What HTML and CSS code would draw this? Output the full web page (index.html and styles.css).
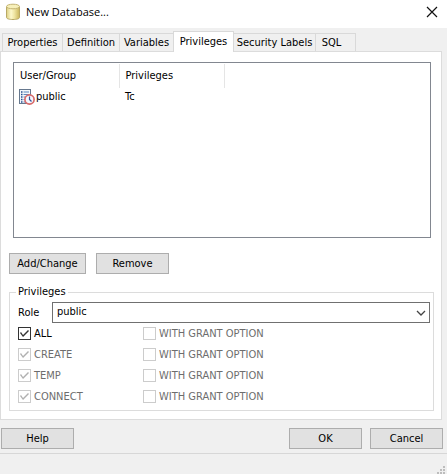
FILE: index.html
```html
<!DOCTYPE html>
<html lang="en">
<head>
<meta charset="utf-8">
<title>New Database...</title>
<link rel="stylesheet" href="styles.css">
</head>
<body>
<form class="dialog">
  <header class="titlebar">
    <svg class="db-icon" width="16" height="18" viewBox="0 0 16 18" aria-hidden="true">
      <defs>
        <linearGradient id="gold"><stop offset="0" stop-color="#dccf80"/><stop offset=".35" stop-color="#fdf8cc"/><stop offset=".6" stop-color="#f0e6a4"/><stop offset="1" stop-color="#cbb65c"/></linearGradient>
      </defs>
      <path d="M1.500 4v10.500c0 1.300 3 2 6.500 2s6.500-.7 6.500-2V4z" fill="url(#gold)" stroke="#b9a966"/>
      <ellipse cx="8" cy="3.500" rx="6.500" ry="2.300" fill="#f7f0ba" stroke="#c4b473"/>
    </svg>
    <h1 class="title">New Database...</h1>
    <button class="close" type="button" aria-label="Close">
      <svg width="12" height="12" viewBox="0 0 12 12"><path d="M1 1l10 10M11 1L1 11" stroke="#111" stroke-width="1.200"/></svg>
    </button>
  </header>
  <main class="body">
    <div class="tabs" role="tablist">
      <button class="tab tab-properties" type="button" role="tab">Properties</button>
      <button class="tab tab-definition" type="button" role="tab">Definition</button>
      <button class="tab tab-variables" type="button" role="tab">Variables</button>
      <button class="tab tab-privileges active" type="button" role="tab" aria-selected="true">Privileges</button>
      <button class="tab tab-security" type="button" role="tab">Security Labels</button>
      <button class="tab tab-sql" type="button" role="tab">SQL</button>
    </div>
    <section class="panel">
      <div class="list">
        <table class="grants">
          <thead><tr><th class="col-user">User/Group</th><th class="col-priv">Privileges</th><th></th></tr></thead>
          <tbody><tr>
            <td><span class="user">
              <svg width="16" height="16" viewBox="0 0 16 16" aria-hidden="true">
                <rect x=".5" y=".5" width="11" height="14" fill="#f3f7fc" stroke="#66788e"/>
                <path d="M2 3h1.500M2 5.500h1.500M2 8h1.500M2 10.500h1.500M2 13h1.500" stroke="#244f91" stroke-width="1.300"/>
                <path d="M4.500 3H10M4.500 5.500H10M4.500 8H10M4.500 10.500H7M4.500 13H7" stroke="#5d87bd" stroke-width="1.200"/>
                <circle cx="10.500" cy="10.500" r="4.600" fill="#f4f7ff" stroke="#d86a6a" stroke-width="1.700"/>
                <path d="M10.500 7.500v3l2 2" fill="none" stroke="#32549a" stroke-width="1.200"/>
              </svg>public</span></td>
            <td>Tc</td><td></td>
          </tr></tbody>
        </table>
      </div>
      <div class="actions">
        <button class="btn btn-add" type="button">Add/Change</button>
        <button class="btn" type="button">Remove</button>
      </div>
      <fieldset class="group">
        <legend>Privileges</legend>
        <div class="role">
          <label for="role">Role</label>
          <div class="combo">
            <select id="role"><option>public</option></select>
            <svg class="chevron" width="10" height="6" viewBox="0 0 10 6" aria-hidden="true"><path d="M1 1l4 4 4-4" fill="none" stroke="#444" stroke-width="1.300"/></svg>
          </div>
        </div>
        <div class="checks">
          <label class="check"><input type="checkbox" checked>ALL</label>
          <label class="check"><input type="checkbox" disabled>WITH GRANT OPTION</label>
          <label class="check"><input type="checkbox" checked disabled>CREATE</label>
          <label class="check"><input type="checkbox" disabled>WITH GRANT OPTION</label>
          <label class="check"><input type="checkbox" checked disabled>TEMP</label>
          <label class="check"><input type="checkbox" disabled>WITH GRANT OPTION</label>
          <label class="check"><input type="checkbox" checked disabled>CONNECT</label>
          <label class="check"><input type="checkbox" disabled>WITH GRANT OPTION</label>
        </div>
      </fieldset>
    </section>
  </main>
  <div class="buttons">
    <button class="btn" type="button">Help</button>
    <button class="btn btn-ok" type="button">OK</button>
    <button class="btn" type="button">Cancel</button>
  </div>
  <footer class="status">
    <svg width="8" height="8" viewBox="0 0 8 8" aria-hidden="true"><path d="M6 0h2v2H6zM3 3h2v2H3zM6 3h2v2H6zM0 6h2v2H0zM3 6h2v2H3zM6 6h2v2H6z" fill="#bdbdbd"/></svg>
  </footer>
</form>
</body>
</html>
```

FILE: styles.css
```css
* { box-sizing: border-box; }

body {
  margin: 0;
  background: #f0f0f0;
  color: #000;
  font: 11px/14px "DejaVu Sans Condensed", "DejaVu Sans", sans-serif;
}

button, select, input { font: inherit; color: inherit; margin: 0; }

.dialog { display: flex; flex-direction: column; min-height: 100vh; }

.titlebar {
  display: flex;
  align-items: center;
  gap: 4px;
  height: 28px;
  padding: 0 9px 4px 5px;
  background: #fff;
}
.db-icon { flex: none; }
.title { flex: 1; margin: 0 0 0 1px; font: 11px/16px "Open Sans", sans-serif; }
.close { display: flex; padding: 0; border: 0; background: none; }

.body { padding: 3px 5px 0 0; }

.tabs {
  position: relative;
  z-index: 1;
  display: flex;
  align-items: flex-end;
  height: 20px;
  padding-left: 2px;
}
.tab {
  height: 18px;
  padding: 0;
  border: 1px solid #d9d9d9;
  border-width: 1px 1px 0 0;
  background: #f0f0f0;
  white-space: nowrap;
}
.tab-properties { width: 61px; border-left-width: 1px; }
.tab-definition { width: 57px; }
.tab-variables { width: 53px; border-right: 0; }
.tab-privileges { width: 61px; border-left-width: 1px; }
.tab-security { width: 82px; }
.tab-sql { width: 40px; padding-right: 8px; }
.tab.active { height: 21px; margin-bottom: -1px; padding-bottom: 1px; background: #fff; }

.panel {
  padding: 10px 7px 8px 8px;
  border: 1px solid #dcdcdc;
  background: #fff;
}

.list { height: 176px; margin: 0 3px 0 4px; padding: 1px 0; border: 1px solid #828790; }
.grants { width: 100%; table-layout: fixed; border-collapse: collapse; }
.grants th { height: 24px; padding: 0 0 0 6px; font-weight: normal; text-align: left; }
.grants td { height: 18px; padding: 0 0 0 6px; }
.grants th:not(:last-child) { border-right: 1px solid #e5e5e5; }
.col-user { width: 105px; }
.col-priv { width: 105px; }
.user { display: flex; align-items: center; gap: 1px; margin-left: -1px; }

.actions { display: flex; gap: 10px; margin: 15px 0 11px; }
.btn {
  width: 73px;
  height: 21px;
  padding: 0;
  border: 1px solid #adadad;
  background: #e1e1e1;
}
.btn-add { width: 77px; }

.group { min-width: 0; margin: 0; padding: 3px 3px 3px 8px; border: 1px solid #dcdcdc; }
.group legend { margin-left: -2px; padding: 0 2px; }

.role { display: grid; grid-template-columns: 34px 1fr; align-items: center; }
.combo { display: grid; align-items: center; }
.combo > * { grid-area: 1 / 1; }
.combo select {
  width: 100%;
  height: 21px;
  padding: 0 20px 1px 4px;
  border: 1px solid #707070;
  border-radius: 0;
  background: #fff;
  appearance: none;
}
.chevron { justify-self: end; margin-right: 4px; pointer-events: none; }

.checks { display: grid; grid-template-columns: 125px 1fr; grid-auto-rows: 21px; }
.check { display: flex; align-items: center; gap: 3px; }
.check:has(:disabled) { color: #6d6d6d; }
.check input {
  display: grid;
  place-items: center;
  width: 13px;
  height: 13px;
  border: 1px solid #333;
  background: #fff;
  appearance: none;
}
.check input:disabled { border-color: #ccc; }
.check input:checked::before {
  content: "";
  width: 11px;
  height: 11px;
  background: #333;
  clip-path: polygon(1px 5px, 2px 4px, 4px 7px, 9px 2px, 10px 3px, 4px 9px);
}
.check input:checked:disabled::before { background: #b0b0b0; }

.buttons { display: flex; gap: 8px; padding: 8px 4px 4px 1px; }
.btn-ok { margin-left: auto; }

.status {
  display: flex;
  flex: 1;
  align-items: flex-end;
  justify-content: flex-end;
  min-height: 20px;
  padding-right: 2px;
  border-top: 1px solid #d7d7d7;
}
```
